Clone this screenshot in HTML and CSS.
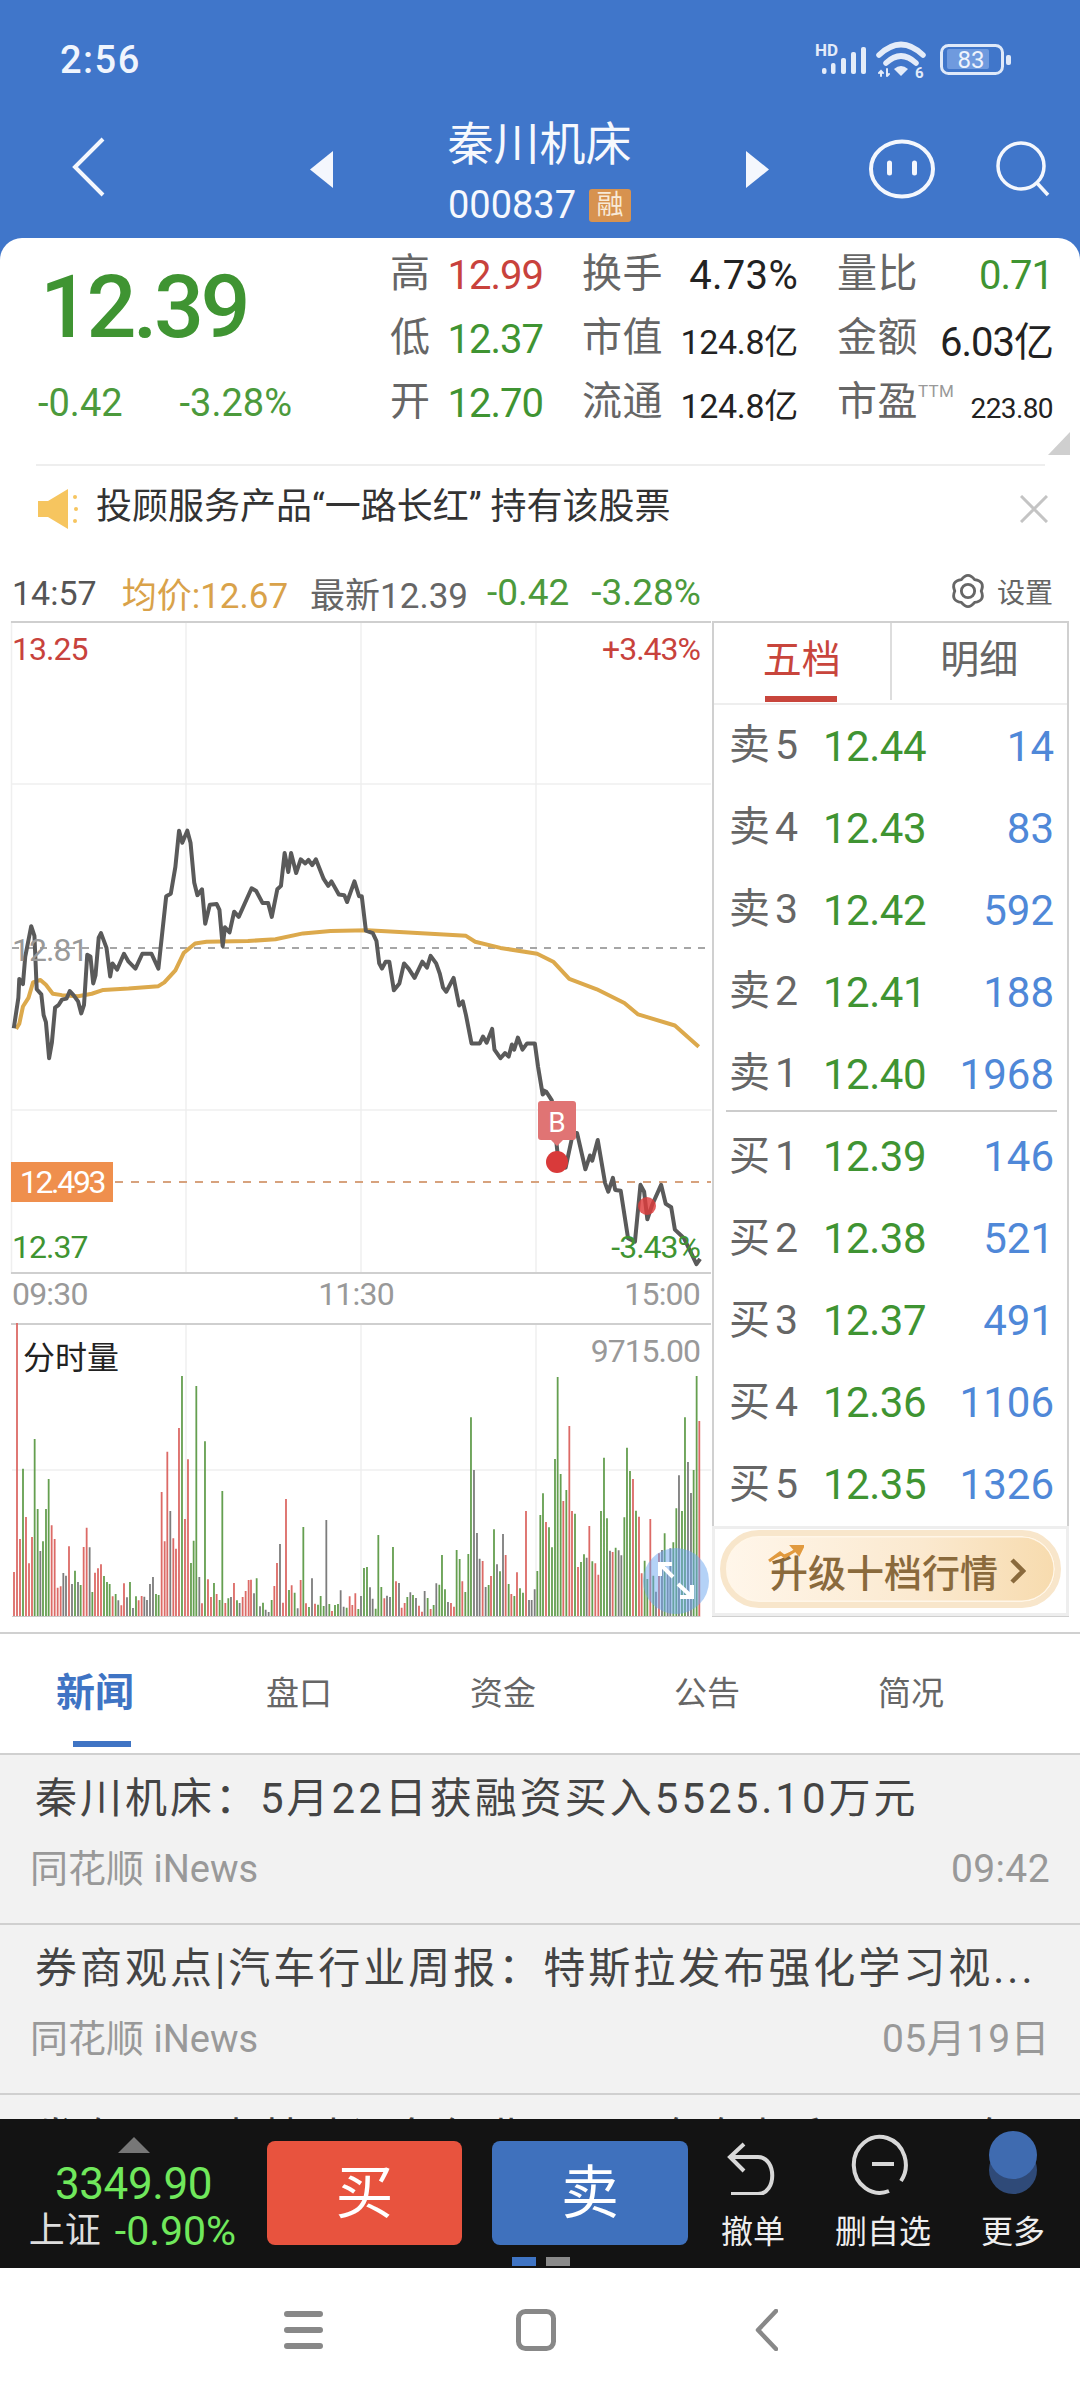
FILE: index.html
```html
<!DOCTYPE html>
<html lang="zh-CN">
<head>
<meta charset="utf-8">
<title>秦川机床</title>
<link rel="stylesheet" href="styles.css">
</head>
<body>
<div class="screen">
  <header class="header">
    <div class="status">
      <span class="clock">2:56</span>
      <svg class="status-icons" viewBox="816 40 196 40" width="196" height="40">
        <text class="hd" x="815" y="56">HD</text>
        <g class="sig">
          <rect x="822" y="68" width="4.5" height="6" rx="2"/><rect x="831" y="63" width="4.5" height="11" rx="2"/><rect x="841" y="58" width="5" height="16" rx="2"/><rect x="851" y="52" width="5" height="22" rx="2"/><rect x="861" y="47" width="5" height="27" rx="2"/>
        </g>
        <g class="wifi">
          <path d="M879 55Q901 34 923 55"/><path d="M886 63Q901 49 916 63"/>
          <path class="wifi-fill" d="M894 69Q901 63 908 69L901 76Z"/>
          <path class="wifi-thin" d="M881 71V76M887 69V76M879 73L881 71L883 73M889 74L887 76"/>
        </g>
        <text class="six" x="915" y="78">6</text>
        <rect class="bat-fill" x="947" y="49" width="42" height="20" rx="2"/>
        <rect class="bat" x="941.5" y="45.5" width="61" height="28" rx="7"/>
        <rect class="bat-nub" x="1006" y="55" width="5" height="10" rx="2"/>
        <text class="bat-num" x="971" y="68">83</text>
      </svg>
    </div>
    <div class="nav">
      <svg class="ic-back" viewBox="0 0 33 60" width="33" height="60"><path d="M31 2L3 30L31 58"/></svg>
      <svg class="ic-tri" viewBox="0 0 23 37" width="23" height="37"><path d="M23 0V37L0 18.500Z"/></svg>
      <div class="title-block">
        <div class="title">秦川机床</div>
        <div class="code"><span>000837</span><span class="rong">融</span></div>
      </div>
      <svg class="ic-tri" viewBox="0 0 23 37" width="23" height="37"><path d="M0 0V37L23 18.500Z"/></svg>
      <svg class="ic-face" viewBox="0 0 66 60" width="66" height="60"><ellipse cx="33" cy="30" rx="31" ry="27.500"/><path d="M20.500 24V34M45.500 24V34"/></svg>
      <svg class="ic-search" viewBox="0 0 54 56" width="54" height="56"><circle cx="25" cy="25" r="23"/><path d="M41 42L52 54"/></svg>
    </div>
  </header>

  <section class="quote">
    <div class="quote-main">
      <div class="quote-left">
        <div class="big-price">12.39</div>
        <div class="change"><span>-0.42</span><span>-3.28%</span></div>
      </div>
      <div class="stats">
        <div class="pair"><span class="k">高</span><span class="v red">12.99</span></div>
        <div class="pair"><span class="k">换手</span><span class="v black wide">4.73%</span></div>
        <div class="pair"><span class="k">量比</span><span class="v green">0.71</span></div>
        <div class="pair"><span class="k">低</span><span class="v green">12.37</span></div>
        <div class="pair"><span class="k">市值</span><span class="v black small">124.8亿</span></div>
        <div class="pair"><span class="k">金额</span><span class="v black">6.03亿</span></div>
        <div class="pair"><span class="k">开</span><span class="v green">12.70</span></div>
        <div class="pair"><span class="k">流通</span><span class="v black small">124.8亿</span></div>
        <div class="pair"><span class="k ttm-wrap">市盈<span class="ttm">TTM</span></span><span class="v black tiny">223.80</span></div>
      </div>
      <svg class="corner" viewBox="0 0 22 23" width="22" height="23"><path d="M22 0V23H0Z"/></svg>
    </div>
    <div class="rule"></div>
    <div class="notice">
      <svg class="speaker" viewBox="0 0 42 40" width="42" height="40"><path d="M0 12H10L30 0V40L10 28H0Z"/><circle cx="37" cy="8" r="2"/><circle cx="38" cy="20" r="2"/><circle cx="37" cy="32" r="2"/></svg>
      <span class="notice-text">投顾服务产品“一路长红” 持有该股票</span>
      <svg class="close" viewBox="0 0 28 28" width="28" height="28"><path d="M1 1L27 27M27 1L1 27"/></svg>
    </div>
  </section>

  <section class="market">
    <div class="info-row">
      <span class="t-time">14:57</span>
      <span class="t-avg">均价:12.67</span>
      <span class="t-last">最新12.39</span>
      <span class="t-chg">-0.42</span>
      <span class="t-pct">-3.28%</span>
      <span class="settings">
        <svg class="gear" viewBox="-1 -1 38 38" width="36" height="36"><path d="M11 5.900Q18 -3 25 5.900Q36.200 7.500 32 18Q36.200 28.500 25 30.100Q18 39 11 30.100Q-.2 28.500 4 18Q-.2 7.500 11 5.900Z"/><circle cx="18" cy="18" r="7"/></svg>
        设置
      </span>
    </div>
    <div class="chart-row">
      <div class="chart-left">
        <div class="panel panel-price">
          <svg class="plot" viewBox="0 621 712 653" width="712" height="653">
            <g class="grid">
              <path d="M186 621V1274M361 621V1274M536 621V1274M12 784H711M12 1110H711M11.500 621V1274"/>
            </g>
            <path class="frame" d="M11 622H711M11 1273H711"/>
            <path class="dash-gray" d="M12 948H711"/>
            <path class="dash-orange" d="M115 1182H711"/>
            <g transform="translate(0 560) scale(.4591 .3448)">
              <path class="avg-line" d="M35 1360L42 1345L50 1295L62 1270L72 1225L88 1218L100 1232L115 1258L135 1262L170 1265L200 1258L225 1247L280 1243L345 1236L358 1225L382 1190L400 1140L425 1112L450 1107L540 1105L600 1100L660 1083L720 1076L800 1074L870 1079L1015 1090L1035 1107L1090 1125L1170 1142L1205 1165L1240 1215L1300 1245L1360 1285L1390 1318L1470 1350L1522 1412"/>
              <path class="price-line" d="M30 1358L40 1270L42 1215L50 1230L55 1150L68 1062L75 1090L80 1245L90 1260L95 1320L100 1340L107 1445L113 1400L120 1298L128 1290L135 1275L145 1272L152 1250L160 1262L170 1280L177 1315L183 1290L190 1145L197 1150L203 1228L208 1205L215 1095L220 1082L232 1125L240 1208L245 1170L255 1188L270 1142L280 1165L295 1185L310 1142L330 1142L345 1185L362 975L372 968L382 890L390 785L397 820L408 785L415 820L423 935L430 972L440 955L447 1055L457 1000L472 998L478 1015L485 1120L490 1065L500 1080L510 1020L520 1035L548 952L558 960L572 995L584 995L592 1035L604 955L612 945L620 850L628 905L634 850L645 908L655 868L665 880L672 870L680 885L688 868L705 925L715 945L722 932L738 970L750 972L756 992L772 932L782 975L788 975L797 1075L812 1082L820 1105L826 1170L832 1185L840 1165L848 1165L858 1248L870 1228L880 1170L890 1185L903 1212L920 1165L930 1182L938 1148L950 1170L958 1200L965 1240L972 1252L988 1212L1000 1292L1008 1280L1015 1320L1027 1402L1045 1402L1052 1382L1060 1400L1072 1360L1077 1420L1090 1445L1100 1430L1108 1440L1115 1405L1120 1420L1128 1385L1138 1420L1148 1402L1165 1402L1172 1470L1182 1550L1190 1540"/>
            </g>
            <g transform="translate(0 1090) scale(.4591 .3448)">
              <path class="price-line" d="M1182 0L1190 5L1202 30L1215 190L1232 225L1248 125L1257 125L1275 230L1285 190L1290 205L1302 145L1318 270L1325 295L1335 255L1340 290L1352 292L1368 430L1383 440L1395 275L1403 295L1410 375L1420 335L1440 275L1450 330L1462 340L1470 405L1490 430L1517 505L1525 490"/>
            </g>
            <path class="flag" d="M541 1101H573Q576 1101 576 1104V1137Q576 1140 573 1140H563L557 1146L551 1140H541Q538 1140 538 1137V1104Q538 1101 541 1101Z"/>
            <text class="flag-text" x="557" y="1132">B</text>
            <circle class="dot" cx="557" cy="1162" r="11"/>
            <circle class="dot dot-soft" cx="647" cy="1206" r="9"/>
          </svg>
          <span class="lab lab-red at-top-l">13.25</span>
          <span class="lab lab-red at-top-r">+3.43%</span>
          <span class="lab lab-gray at-mid-l">12.81</span>
          <span class="price-tag">12.493</span>
          <span class="lab lab-green at-bot-l">12.37</span>
          <span class="lab lab-green at-bot-r">-3.43%</span>
        </div>
        <div class="axis"><span>09:30</span><span>11:30</span><span>15:00</span></div>
        <div class="panel panel-vol">
          <svg class="plot" viewBox="0 1323 712 294" width="712" height="294">
            <path class="grid-line" d="M186 1323V1617M361 1323V1617M536 1323V1617M12 1470H711"/>
            <path class="frame" d="M11 1324H711"/>
            <g transform="translate(10 1370) scale(.3333)">
              <path class="bar-r" d="M12 740V606M21 740V-141M30 740V507M48 740V441M57 740V580M66 740V501M125 740V466M134 740V507M143 740V653M152 740V649M177 740V529M221 740V531M230 740V473M255 740V608M264 740V595M273 740V583M308 740V679M334 740V706M342 740V640M386 740V691M395 740V678M455 740V366M464 740V514M472 740V245M490 740V505M498 740V536M507 740V174M525 740V447M534 740V268M576 740V700M594 740V628M603 740V681M620 740V672M646 740V699M672 740V639M698 740V681M707 740V663M716 740V630"/>
              <path class="bar-g" d="M39 740V296M74 740V207M83 740V417M99 740V514M108 740V417M116 740V327M195 740V602M212 740V645M247 740V666M282 740V618M291 740V636M299 740V642M317 740V672M360 740V636M378 740V679M438 740V672M446 740V675M516 740V18M543 740V579M551 740V512M559 740V48M585 740V214M612 740V639M629 740V690M637 740V363M655 740V685M681 740V691"/>
              <path class="bar-x" d="M91 740V543M160 740V609M168 740V617M186 740V642M204 740V636M239 740V532M325 740V691M351 740V682M369 740V714M403 740V680M411 740V690M420 740V642M429 740V621M481 740V423M568 740V621M663 740V681M689 740V699"/>
            </g>
            <g transform="translate(250 1370) scale(.3333)">
              <path class="bar-r" d="M3 740V629M73 740V648M81 740V579M99 740V698M108 740V387M125 740V646M152 740V630M168 740V700M195 740V701M246 740V723M299 740V679M307 740V705M316 740V670M403 740V685M438 740V634M455 740V713M464 740V699M507 740V707M516 740V725M542 740V717M603 740V699M612 740V710M637 740V634M698 740V573"/>
              <path class="bar-g" d="M20 740V625M39 740V698M65 740V690M117 740V660M134 740V668M160 740V471M177 740V711M204 740V704M212 740V678M221 740V708M238 740V702M255 740V705M264 740V702M290 740V713M325 740V717M342 740V594M351 740V591M377 740V716M385 740V495M394 740V651M429 740V531M472 740V681M489 740V675M533 740V684M551 740V705M568 740V644M576 740V555M585 740V658M620 740V540M629 740V567M646 740V666M655 740V552M663 740V142M716 740V645"/>
              <path class="bar-x" d="M12 740V670M30 740V709M47 740V719M56 740V726M90 740V522M143 740V715M186 740V625M229 740V450M272 740V661M281 740V710M333 740V678M360 740V652M368 740V686M411 740V677M420 740V681M447 740V639M481 740V667M498 740V684M524 740V663M559 740V640M594 740V696M672 740V300M681 740V489M689 740V566M707 740V651"/>
            </g>
            <g transform="translate(490 1370) scale(.3333)">
              <path class="bar-r" d="M3 740V618M47 740V555M64 740V672M81 740V607M108 740V423M168 740V456M220 740V393M238 740V168M246 740V423M264 740V591M298 740V468M316 740V580M325 740V614M368 740V546M429 740V327M447 740V440M455 740V610M481 740V447M507 740V550M628 740V153"/>
              <path class="bar-g" d="M12 740V478M30 740V604M56 740V642M73 740V678M90 740V655M99 740V668M142 740V603M151 740V435M159 740V370M177 740V472M186 740V532M195 740V267M203 740V21M212 740V312M229 740V360M255 740V431M273 740V576M282 740V553M307 740V574M333 740V423M342 740V263M351 740V445M377 740V533M403 740V442M411 740V233M420 740V303M438 740V422M464 740V572M472 740V627M490 740V617M524 740V490M550 740V517M559 740V415M576 740V423M585 740V142M611 740V300M620 740V18"/>
              <path class="bar-x" d="M21 740V583M39 740V492M117 740V690M125 740V690M134 740V658M290 740V563M360 740V542M386 740V541M394 740V556M498 740V665M516 740V540M533 740V600M541 740V535M567 740V316M594 740V276M603 740V369"/>
            </g>
            <path class="base" d="M12 1616.500H700"/>
            <circle class="expand" cx="676" cy="1581" r="33"/>
            <path class="expand-arrow" d="M660 1576V1564H672M660 1564L673 1577M692 1585V1597H680M692 1597L678 1584"/>
          </svg>
          <span class="vol-name">分时量</span>
          <span class="lab lab-gray at-vol-r">9715.00</span>
        </div>
      </div>
      <aside class="book">
        <div class="book-tabs">
          <div class="book-tab on">五档</div>
          <div class="book-tab">明细</div>
        </div>
        <div class="book-row"><span class="b-k">卖5</span><span class="b-p">12.44</span><span class="b-q">14</span></div>
        <div class="book-row"><span class="b-k">卖4</span><span class="b-p">12.43</span><span class="b-q">83</span></div>
        <div class="book-row"><span class="b-k">卖3</span><span class="b-p">12.42</span><span class="b-q">592</span></div>
        <div class="book-row"><span class="b-k">卖2</span><span class="b-p">12.41</span><span class="b-q">188</span></div>
        <div class="book-row"><span class="b-k">卖1</span><span class="b-p">12.40</span><span class="b-q">1968</span></div>
        <div class="book-sep"></div>
        <div class="book-row"><span class="b-k">买1</span><span class="b-p">12.39</span><span class="b-q">146</span></div>
        <div class="book-row"><span class="b-k">买2</span><span class="b-p">12.38</span><span class="b-q">521</span></div>
        <div class="book-row"><span class="b-k">买3</span><span class="b-p">12.37</span><span class="b-q">491</span></div>
        <div class="book-row"><span class="b-k">买4</span><span class="b-p">12.36</span><span class="b-q">1106</span></div>
        <div class="book-row"><span class="b-k">买5</span><span class="b-p">12.35</span><span class="b-q">1326</span></div>
        <div class="upgrade-wrap">
          <div class="upgrade">
            <svg class="spark" viewBox="0 0 36 18" width="36" height="18"><path d="M1 16L12 8L17 12L31 3M24 1H35L31 9Z"/></svg>
            <span class="upgrade-text">升级十档行情</span>
            <svg class="chev" viewBox="0 0 16 26" width="16" height="26"><path d="M2 2L13 13L2 24"/></svg>
          </div>
        </div>
      </aside>
    </div>
  </section>

  <nav class="tabs">
    <div class="tab active">新闻</div>
    <div class="tab">盘口</div>
    <div class="tab">资金</div>
    <div class="tab">公告</div>
    <div class="tab">简况</div>
  </nav>

  <section class="news">
    <article class="item">
      <h3 class="item-title">秦川机床：5月22日获融资买入5525.10万元</h3>
      <div class="item-meta"><span>同花顺 iNews</span><span class="item-time">09:42</span></div>
    </article>
    <article class="item">
      <h3 class="item-title">券商观点|汽车行业周报：特斯拉发布强化学习视...</h3>
      <div class="item-meta"><span>同花顺 iNews</span><span class="item-time">05月19日</span></div>
    </article>
    <article class="item">
      <h3 class="item-title">发布：国内基础设备行业 2022 年年报和 2023 年</h3>
    </article>
  </section>

  <footer class="trade">
    <div class="mkt">
      <svg class="mkt-tri" viewBox="0 0 32 16" width="32" height="16"><path d="M16 0L32 16H0Z"/></svg>
      <div class="mkt-num">3349.90</div>
      <div class="mkt-row"><span class="mkt-name">上证</span><span class="mkt-pct">-0.90%</span></div>
    </div>
    <div class="btn btn-buy">买</div>
    <div class="btn btn-sell">卖</div>
    <div class="act">
      <svg class="act-ic" viewBox="0 0 64 64" width="64" height="64"><path d="M9 26H37C56 26 56 63 37 63H10M23 13L9 26L23 40"/></svg>
      <span>撤单</span>
    </div>
    <div class="act">
      <svg class="act-ic" viewBox="0 0 64 64" width="64" height="64"><path d="M38 60A26 28 0 1 1 50 50M21 33H43"/></svg>
      <span>删自选</span>
    </div>
    <div class="act">
      <svg class="act-ic" viewBox="0 0 64 64" width="64" height="64"><ellipse class="more-b" cx="32" cy="39" rx="24" ry="24"/><ellipse class="more-a" cx="32" cy="24" rx="24" ry="24"/></svg>
      <span>更多</span>
    </div>
    <div class="pager"><i class="p-on"></i><i></i></div>
  </footer>

  <div class="sysnav">
    <svg class="sys-menu" viewBox="0 0 39 42" width="39" height="42"><path d="M3 5H36M3 21H36M3 37H36"/></svg>
    <svg class="sys-home" viewBox="0 0 40 42" width="40" height="42"><rect x="2.500" y="2.500" width="35" height="37" rx="7"/></svg>
    <svg class="sys-back" viewBox="0 0 23 42" width="23" height="42"><path d="M21 2L3 21L21 40"/></svg>
  </div>
</div>
</body>
</html>
```

FILE: styles.css
```css
* { box-sizing: border-box; }
html, body { margin: 0; padding: 0; }
body { background: #fff; font-family: Roboto, "Noto Sans CJK SC", sans-serif; color: #333; }
.screen { width: 1080px; height: 2400px; overflow: hidden; display: flex; flex-direction: column; }
svg { display: block; flex: none; }

/* header */
.header { background: #4076ca; height: 262px; margin-bottom: -24px; flex: none; color: #fff; }
.status { height: 100px; display: flex; justify-content: space-between; align-items: flex-start; padding: 37px 68px 0 60px; }
.clock { font-size: 38px; line-height: 46px; font-weight: 500; letter-spacing: 1.5px; color: #f0f5fd; }
.status-icons { margin-top: 3px; overflow: visible; }
.hd { font-size: 17px; font-weight: 700; fill: #e4ecf9; }
.sig rect { fill: #e4ecf9; }
.wifi path { fill: none; stroke: #e4ecf9; stroke-width: 5.500; stroke-linecap: round; }
.wifi .wifi-fill { fill: #e4ecf9; stroke: none; }
.wifi .wifi-thin { stroke-width: 2; }
.six { font-size: 15px; font-weight: 700; fill: #e4ecf9; }
.bat { fill: none; stroke: #dfe9f9; stroke-width: 3; }
.bat-fill { fill: #6f9ade; }
.bat-nub { fill: #dfe9f9; }
.bat-num { font-size: 24px; fill: #eef3fc; text-anchor: middle; }
.nav { height: 138px; display: flex; align-items: center; padding-left: 72px; }
.ic-back { margin-right: 205px; margin-bottom: 4px; }
.ic-back path { fill: none; stroke: #f4f7fd; stroke-width: 4; }
.ic-tri path { fill: #f4f7fd; }
.title-block { width: 413px; align-self: stretch; display: flex; flex-direction: column; align-items: center; padding-top: 19px; }
.title { font-size: 46px; line-height: 50px; color: #f6f8fd; }
.code { display: flex; align-items: center; margin-top: 16px; font-size: 38px; line-height: 40px; gap: 13px; color: #f6f8fd; }
.rong { width: 42px; height: 33px; background: #d7924f; border-radius: 3px; font-size: 27px; line-height: 33px; text-align: center; color: #f8ead8; }
.ic-face { margin-left: 100px; }
.ic-face ellipse { fill: none; stroke: #f4f7fd; stroke-width: 4; }
.ic-face path { fill: none; stroke: #f4f7fd; stroke-width: 5; stroke-linecap: round; }
.ic-search { margin-left: 61px; }
.ic-search circle, .ic-search path { fill: none; stroke: #f4f7fd; stroke-width: 3.500; }

/* quote */
.quote { background: #fff; border-radius: 22px 22px 0 0; flex: none; }
.quote-main { height: 226px; display: flex; padding-top: 5px; position: relative; }
.quote-left { width: 390px; padding: 20px 0 0 38px; }
.big-price { font-size: 88px; line-height: 88px; letter-spacing: -3.500px; color: #3f9432; margin-left: 2px; font-weight: 500; }
.change { display: flex; gap: 57px; margin-top: 30px; font-size: 38px; line-height: 44px; color: #4c9a3c; }
.stats { display: grid; grid-template-columns: 153px 216px 216px; column-gap: 39px; grid-auto-rows: 64px; width: 663px; }
.pair { display: flex; justify-content: space-between; align-items: center; }
.k { font-size: 40px; line-height: 50px; margin-bottom: 3px; color: #666; white-space: nowrap; letter-spacing: .5px; }
.v { font-size: 40px; letter-spacing: -1px; white-space: nowrap; }
.red { color: #c8423c; }
.green { color: #3f9432; }
.black { color: #222; }
.wide { letter-spacing: .3px; }
.small { font-size: 34px; letter-spacing: -.3px; }
.tiny { font-size: 28px; margin-top: 10px; letter-spacing: -.6px; }
.ttm-wrap { position: relative; }
.ttm { position: absolute; left: 81px; top: 3px; font-size: 17px; color: #999; letter-spacing: .3px; line-height: 22px; }
.corner { position: absolute; right: 10px; bottom: 9px; }
.corner path { fill: #cfcfcf; }
.rule { height: 2px; margin: 0 35px 0 36px; background: #eee; }
.notice { height: 86px; display: flex; align-items: center; padding: 0 32px 0 38px; }
.speaker { fill: #f6c55f; }
.notice-text { font-size: 36px; line-height: 44px; margin: 0 0 5px 16px; color: #333; flex: 1; white-space: nowrap; }
.close path { fill: none; stroke: #c4c4c4; stroke-width: 3; }

/* market */
.market { margin-top: 11px; background: #fff; flex: none; padding-bottom: 15px; border-bottom: 2px solid #d0d0d0; }
.info-row { height: 58px; display: flex; align-items: center; padding: 1px 27px 0 12px; font-size: 35px; white-space: nowrap; }
.t-time { color: #555; font-size: 34px; }
.t-avg { color: #d9a24a; margin-left: 25px; }
.t-last { color: #666; margin-left: 22px; }
.t-chg { color: #4c9a3c; margin-left: 19px; font-size: 37px; }
.t-pct { color: #4c9a3c; margin-left: 22px; font-size: 37px; }
.settings { margin-left: auto; display: flex; align-items: center; gap: 11px; font-size: 28px; color: #666; margin-bottom: 4px; }
.gear path, .gear circle { fill: none; stroke: #666; stroke-width: 3; }
.chart-row { display: flex; }
.chart-left { width: 712px; flex: none; }
.panel { position: relative; }
.panel-price { height: 653px; }
.panel-vol { height: 294px; }
.plot { overflow: visible; }
.grid path, .grid-line { fill: none; stroke: #efefef; stroke-width: 1.500; }
.frame { fill: none; stroke: #cfcfcf; stroke-width: 2; }
.dash-gray { stroke: #a6a6a6; stroke-width: 2; stroke-dasharray: 7 7; fill: none; }
.dash-orange { stroke: #d7a27d; stroke-width: 2; stroke-dasharray: 8 8; fill: none; }
.avg-line { fill: none; stroke: #dca94c; stroke-width: 4; vector-effect: non-scaling-stroke; stroke-linejoin: round; }
.price-line { fill: none; stroke: #5a5a5a; stroke-width: 4; vector-effect: non-scaling-stroke; stroke-linejoin: round; }
.flag { fill: #e07474; }
.flag-text { font-size: 28px; fill: #fff; text-anchor: middle; }
.dot { fill: #d93a3a; }
.dot-soft { fill: rgba(222, 60, 60, .82); }
.bar-r, .bar-g, .bar-x { fill: none; stroke-width: 1.800; vector-effect: non-scaling-stroke; }
.bar-r { stroke: #dc6a66; }
.bar-g { stroke: #659f50; }
.bar-x { stroke: #7d7d7d; }
.base { stroke: #ccc; stroke-width: 1; fill: none; }
.expand { fill: rgba(105, 165, 240, .5); }
.expand-arrow { fill: none; stroke: #fff; stroke-width: 4; }
.lab { position: absolute; font-size: 32px; line-height: 40px; letter-spacing: -1px; white-space: nowrap; }
.lab-red { color: #c8423c; }
.lab-green { color: #3f9432; }
.lab-gray { color: #999; }
.at-top-l { left: 12px; top: 8px; }
.at-top-r { right: 12px; top: 8px; }
.at-mid-l { left: 12px; top: 309px; }
.at-bot-l { left: 12px; top: 606px; }
.at-bot-r { right: 12px; top: 606px; }
.at-vol-r { right: 12px; top: 8px; }
.price-tag { position: absolute; left: 11px; top: 541px; width: 102px; height: 40px; background: #ef8f4d; color: #fff; font-size: 32px; line-height: 40px; text-align: center; letter-spacing: -2.300px; }
.axis { height: 49px; display: flex; justify-content: space-between; align-items: center; padding: 0 12px 10px; font-size: 32px; color: #999; letter-spacing: -.8px; }
.vol-name { position: absolute; left: 23px; top: 15px; font-size: 32px; line-height: 40px; color: #222; }

/* order book */
.book { width: 357px; height: 996px; flex: none; border: 2px solid #d0d0d0; border-bottom-width: 1px; display: flex; flex-direction: column; }
.book-tabs { height: 82px; flex: none; display: flex; border-bottom: 2px solid #eee; }
.book-tab { flex: 1; font-size: 39px; line-height: 74px; text-align: center; color: #666; position: relative; }
.book-tab.on { color: #c8453c; border-right: 2px solid #ddd; margin-bottom: 3px; }
.book-tab.on::after { content: ""; position: absolute; left: 51px; bottom: -2px; width: 72px; height: 6px; background: #c8453c; }
.book-row { height: 82.100px; flex: none; display: grid; grid-template-columns: 68px 129px 1fr; align-items: center; padding: 0 13px 0 15px; }
.b-k { font-size: 41px; line-height: 50px; margin-bottom: 2px; color: #666; letter-spacing: 5px; white-space: nowrap; }
.b-p { font-size: 42px; color: #3f9432; text-align: right; letter-spacing: -.5px; }
.b-q { font-size: 42px; color: #4f88d8; text-align: right; }
.book-sep { height: 2px; margin: -5px 10px 3px 12px; background: #ccc; flex: none; }
.upgrade-wrap { flex: 1; border: 3px solid #eee; margin: 0 -2px; padding: 1px 5px 0; display: flex; align-items: flex-start; }
.upgrade { width: 341px; height: 78px; border-radius: 39px; background: linear-gradient(90deg, #fff6ea 0%, #fbe9cf 60%, #f7dbae 100%); border: 6px solid #f8e6cb; box-shadow: inset 0 0 0 1.500px #fff6e8; position: relative; display: flex; align-items: center; padding-left: 44px; font-size: 38px; color: #8a6a3c; font-weight: 500; white-space: nowrap; }
.upgrade-text { line-height: 50px; margin-top: 10px; }
.spark { position: absolute; left: 42px; top: 9px; }
.spark path { fill: #e19a3f; stroke: #e19a3f; stroke-width: 3; }
.chev { margin-left: 12px; margin-top: 4px; }
.chev path { fill: none; stroke: #8a6a3c; stroke-width: 4.500; }

/* tabs */
.tabs { height: 119px; flex: none; display: grid; grid-template-columns: repeat(5, 204px); margin-left: -7px; background: #fff; }
.tab { font-size: 33px; line-height: 120px; text-align: center; color: #666; position: relative; }
.tab.active { font-size: 39px; line-height: 118px; font-weight: 700; color: #3f74c4; }
.tab.active::after { content: ""; position: absolute; left: 80px; top: 107px; width: 58px; height: 6px; background: #3f74c4; }

/* news */
.news { height: 366px; flex: none; overflow: hidden; background: #f2f2f2; border-top: 2px solid #d0d0d0; }
.item { height: 170px; border-bottom: 2px solid #d0d0d0; padding: 14px 30px 0; flex: none; }
.item-title { margin: 0; padding-left: 5px; font-size: 42px; font-weight: 400; line-height: 60px; color: #444; letter-spacing: 3px; white-space: nowrap; overflow: hidden; }
.item-meta { display: flex; justify-content: space-between; margin-top: 15px; font-size: 38px; line-height: 50px; color: #999; }
.item-time { font-size: 39px; letter-spacing: .4px; }

/* trade bar */
.trade { height: 149px; flex: none; background: #131313; display: flex; position: relative; }
.mkt { width: 267px; flex: none; display: flex; flex-direction: column; align-items: center; padding-top: 18px; }
.mkt-tri path { fill: #777; }
.mkt-num { font-size: 44px; line-height: 44px; margin-top: 9px; color: #70e85c; letter-spacing: -.4px; }
.mkt-row { margin-top: 3px; margin-left: -2px; display: flex; align-items: center; gap: 14px; font-size: 41px; line-height: 44px; white-space: nowrap; }
.mkt-name { font-size: 36px; color: #ddd; }
.mkt-pct { color: #70e85c; }
.btn { width: 195px; height: 104px; margin-top: 22px; flex: none; border-radius: 8px; color: #fff; font-size: 58px; line-height: 104px; text-align: center; }
.btn-buy { background: #e8533e; }
.btn-sell { width: 196px; margin-left: 30px; background: #3f71bd; }
.act { width: 130px; flex: none; display: flex; flex-direction: column; align-items: center; padding-top: 12px; font-size: 32px; line-height: 40px; color: #eee; white-space: nowrap; }
.act span { margin-top: 17px; }
.act-ic path { fill: none; stroke: #d8d8d8; stroke-width: 4; }
.more-a { fill: #3f6bb0; }
.more-b { fill: #2f4a78; }
.pager { position: absolute; left: 512px; top: 138px; display: flex; gap: 10px; }
.pager i { display: block; width: 24px; height: 9px; background: #8a8a8a; }
.pager .p-on { background: #3f74c4; }

/* system nav */
.sysnav { flex: 1; background: #fff; display: flex; align-items: flex-start; padding: 41px 0 0 284px; }
.sys-home { margin-left: 193px; }
.sys-back { margin-left: 199px; }
.sys-menu path { fill: none; stroke: #888; stroke-width: 6; stroke-linecap: round; }
.sys-home rect { fill: none; stroke: #888; stroke-width: 5; }
.sys-back path { fill: none; stroke: #888; stroke-width: 4.500; stroke-linejoin: round; stroke-linecap: round; }
```
